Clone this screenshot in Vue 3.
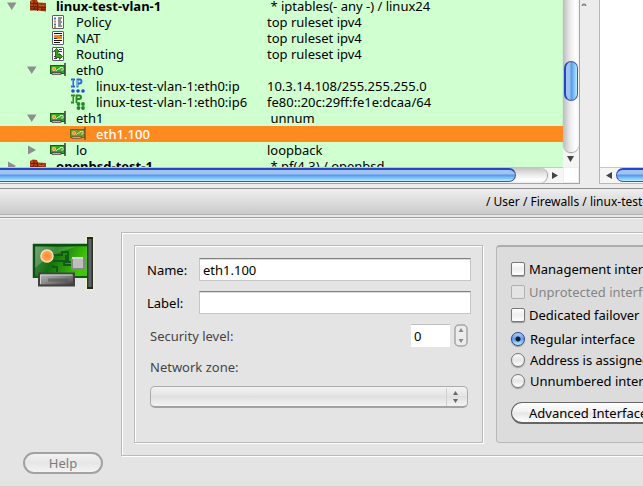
<script setup>
import { ref } from 'vue'

const rows = [
  { level: 0, arrow: 'open', icon: 'firewall', name: 'linux-test-vlan-1', attr: ' * iptables(- any -) / linux24', bold: true },
  { level: 1, icon: 'policy', name: 'Policy', attr: 'top ruleset ipv4' },
  { level: 1, icon: 'nat', name: 'NAT', attr: 'top ruleset ipv4' },
  { level: 1, icon: 'routing', name: 'Routing', attr: 'top ruleset ipv4' },
  { level: 1, arrow: 'open', icon: 'card', name: 'eth0', attr: '' },
  { level: 2, icon: 'ip', name: 'linux-test-vlan-1:eth0:ip', attr: '10.3.14.108/255.255.255.0' },
  { level: 2, icon: 'ip6', name: 'linux-test-vlan-1:eth0:ip6', attr: 'fe80::20c:29ff:fe1e:dcaa/64' },
  { level: 1, arrow: 'open', icon: 'card', name: 'eth1', attr: ' unnum' },
  { level: 2, icon: 'card', name: 'eth1.100', attr: '', selected: true },
  { level: 1, arrow: 'closed', icon: 'card', name: 'lo', attr: 'loopback' },
  { level: 0, arrow: 'closed', icon: 'firewall', name: 'openbsd-test-1', attr: ' * pf(4.3) / openbsd', bold: true },
]

const name = ref('eth1.100')
const label = ref('')
const security = ref('0')
const kind = ref('regular')
const kinds = [
  { id: 'regular', text: 'Regular interface' },
  { id: 'dynamic', text: 'Address is assigned dynamically' },
  { id: 'unnumbered', text: 'Unnumbered interface' },
]
const flags = [
  { id: 'management', text: 'Management interface' },
  { id: 'unprotected', text: 'Unprotected interface', disabled: true },
  { id: 'failover', text: 'Dedicated failover interface' },
]
</script>

<template>
  <div class="page">
    <section class="top">
      <div class="tree-pane">
        <div class="tree-view">
          <table class="tree">
            <colgroup><col class="col-name"><col></colgroup>
            <tbody>
              <tr v-for="row in rows" :key="row.name" :class="{ selected: row.selected }">
                <td>
                  <div class="node" :style="{ paddingLeft: row.level * 20 + 'px' }">
                    <span class="twist">
                      <svg v-if="row.arrow" width="10" height="10" viewBox="0 0 10 10">
                        <path :d="row.arrow === 'open' ? 'M0 1.500h9.500L4.750 9z' : 'M1 0.500v9L9 5z'" fill="#8e8e8e" />
                      </svg>
                    </span>
                    <span class="icon">
                      <svg v-if="row.icon === 'firewall'" width="16" height="14" viewBox="0 0 16 14">
                        <path d="M0 2l3-1.500 4 .5 1 2.500 8 .5v8.500l-8-1-8 0z" fill="#a83a0c" />
                        <path d="M0 4.500h7M0 7.500l16 1M0 10l16 .5M4 1.500v3M7.500 3v9M3 5v3M11.500 4.500v3M12 8v4M4.500 8v3" stroke="#6e2205" fill="none" />
                        <path d="M1 3h2M9 6.500h5M1 6h2M9 10h2" stroke="#d2602c" fill="none" />
                      </svg>
                      <svg v-else-if="row.icon === 'policy'" width="16" height="14" viewBox="0 0 16 14">
                        <rect x="2.500" y="0.500" width="11" height="13" rx="0.500" fill="#fff" stroke="#5c5c6c" />
                        <path d="M4 3.500h2M4 9.500h2" stroke="#2a78d8" stroke-width="2" />
                        <path d="M4 6.500h2M4 12h2" stroke="#f08020" stroke-width="2" />
                        <path d="M8 3h4M8 5h3M8 7h4M8 9h3M8 11h4" stroke="#222" />
                      </svg>
                      <svg v-else-if="row.icon === 'nat'" width="16" height="14" viewBox="0 0 16 14">
                        <rect x="2.500" y="0.500" width="11" height="13" rx="0.500" fill="#fff" stroke="#5c5c6c" />
                        <path d="M4 2.500h8M4 9.500h8M4 11.500h6" stroke="#111" />
                        <rect x="4" y="4" width="8" height="4" fill="#ee8420" />
                        <path d="M4 7.500h3M10 4.500h2" stroke="#32323a" />
                      </svg>
                      <svg v-else-if="row.icon === 'routing'" width="16" height="14" viewBox="0 0 16 14">
                        <rect x="2.500" y="0.500" width="11" height="13" rx="0.500" fill="#fff" stroke="#5c5c6c" />
                        <path d="M9 2.500h3M9 4.500h3M4 9.500h2M4 11.500h3" stroke="#333" />
                        <path d="M6.500 1.500l3 3H8v3h1.500v-1l3 3-3 3v-2H5.500v-6H3.500z" fill="#3c9c1e" stroke="#14500c" stroke-width="0.800" />
                      </svg>
                      <svg v-else-if="row.icon === 'card'" width="16" height="14" viewBox="0 0 16 14" :opacity="row.selected ? 0.700 : 1">
                        <rect x="0.500" y="2.500" width="14" height="8" fill="#2fa41c" stroke="#0c6a0c" />
                        <path d="M6 8l2-2h2V4.500h3V7h-2" fill="none" stroke="#d8e8d0" />
                        <circle cx="4" cy="6" r="1.800" fill="#ff9838" stroke="#f0dc98" stroke-width="0.700" />
                        <rect x="2" y="9.500" width="9" height="2" fill="#b4b4b4" stroke="#383838" stroke-width="0.700" />
                        <path d="M15 0v13" stroke="#404840" stroke-width="1.600" />
                      </svg>
                      <svg v-else-if="row.icon === 'ip'" width="16" height="16" viewBox="0 0 16 16">
                        <path d="M1 1.500h4M3 1v8M1 8.500h4M7.500 9.500V1.500h2.500q1.500 0 1.500 2t-2 2h-1.500" fill="none" stroke="#2468e0" stroke-width="1.900" />
                        <path d="M2.500 2v6M7.500 2v6" stroke="#8cc0ff" stroke-width="0.700" />
                        <g fill="#1c50d0"><circle cx="3" cy="13" r="1.800" /><circle cx="8" cy="13" r="1.800" /><circle cx="13" cy="13" r="1.800" /></g>
                      </svg>
                      <svg v-else width="16" height="16" viewBox="0 0 16 16">
                        <path d="M1 1.500h4M3 1v8M1 8.500h3M6.500 9V1.500h3q1.500 0 1.500 1.700t-2 1.800h-2" fill="none" stroke="#258a20" stroke-width="1.900" />
                        <path d="M2.500 2v6" stroke="#90d880" stroke-width="0.700" />
                        <g fill="#1f8a1c"><circle cx="8.500" cy="10" r="1.900" /><circle cx="13" cy="10" r="1.900" /><circle cx="8.500" cy="14" r="1.900" /><circle cx="13" cy="14" r="1.900" /></g>
                      </svg>
                    </span>
                    <span :class="{ bold: row.bold }">{{ row.name }}</span>
                  </div>
                </td>
                <td>{{ row.attr }}</td>
              </tr>
            </tbody>
          </table>
        </div>
        <div class="vscroll">
          <div class="vtrack"><div class="vthumb"></div></div>
          <svg width="15" height="15" viewBox="0 0 15 15"><path d="M4 4h7l-3.500 6z" fill="#444" /></svg>
        </div>
        <div class="hscroll">
          <div class="htrack"><div class="hthumb"></div></div>
          <svg width="16" height="15" viewBox="0 0 16 15"><path d="M5 4v7l6-3.500z" fill="#444" /></svg>
        </div>
        <div class="corner"></div>
      </div>
      <div class="gutter">
        <svg width="6" height="4" viewBox="0 0 6 4"><path d="M1 3q0-2 2-2t2 2" fill="#bbb" stroke="#666" /></svg>
      </div>
      <div class="side-pane">
        <div class="side-body"></div>
        <div class="side-scroll">
          <svg width="16" height="15" viewBox="0 0 16 15"><path d="M12 4v7L6 7.500z" fill="#444" /></svg>
          <div class="hthumb left"></div>
        </div>
      </div>
    </section>

    <nav class="crumbs">/ User / Firewalls / linux-test-vlan-1 / eth1 / eth1.100</nav>
    <div class="divider"></div>

    <main class="editor">
      <aside class="left">
        <svg class="big-card" width="64" height="56" viewBox="0 0 64 56">
          <defs>
            <linearGradient id="pcb" x1="0" x2="1" y1="0" y2="0.300"><stop offset="0" stop-color="#5d9463" /><stop offset="0.450" stop-color="#12700d" /><stop offset="1" stop-color="#42c609" /></linearGradient>
            <linearGradient id="metal" x1="0" x2="1" y1="0" y2="1"><stop offset="0" stop-color="#bcbcbc" /><stop offset="0.500" stop-color="#858585" /><stop offset="1" stop-color="#393939" /></linearGradient>
            <linearGradient id="bracket" x1="0" x2="1" y1="0" y2="0"><stop offset="0" stop-color="#252a29" /><stop offset="0.500" stop-color="#66706d" /><stop offset="1" stop-color="#1e2322" /></linearGradient>
            <radialGradient id="led"><stop offset="0" stop-color="#ff862c" /><stop offset="1" stop-color="#ffae68" /></radialGradient>
          </defs>
          <rect x="54" y="1" width="8" height="54" rx="1" fill="#f2f5b9" stroke="#ecedcc" />
          <rect x="1" y="9" width="54" height="34" fill="url(#pcb)" />
          <path d="M1 10h54M2 9v34" stroke="#0b4f13" stroke-width="2.500" fill="none" />
          <path d="M2 42h53" stroke="#0b5d10" stroke-width="2" />
          <path d="M3 12h40Q18 19 3 33z" fill="#fff" opacity="0.180" />
          <path d="M21 20h9v-3h6v10h4M21 26h11v4h8M25 37v-5h-4v-2M34 20v7h5" fill="none" stroke="#12591a" stroke-width="2" />
          <circle cx="15" cy="21" r="6" fill="url(#led)" stroke="#fae0b5" stroke-width="1.500" />
          <rect x="40" y="23" width="12" height="11" rx="1" fill="#bebebe" stroke="#858b82" stroke-width="2" />
          <path d="M40 23h11" stroke="#efefef" stroke-width="1.500" />
          <rect x="7" y="38.500" width="35" height="12" fill="url(#metal)" stroke="#414141" stroke-width="2" />
          <path d="M8.500 49V40h32" stroke="#d2d2d2" fill="none" />
          <path d="M16 45h20" stroke="#555" stroke-width="3" opacity="0.600" />
          <rect x="55" y="2" width="6" height="52" fill="url(#bracket)" />
          <path d="M55 3h6M55 53h6" stroke="#202525" stroke-width="2" />
        </svg>
        <button class="help" type="button" disabled>Help</button>
      </aside>

      <form class="frame outer" @submit.prevent>
        <div class="frame fields">
          <div class="field">
            <label for="name">Name:</label>
            <input id="name" v-model="name" class="text" type="text">
          </div>
          <div class="field second">
            <label for="label">Label:</label>
            <input id="label" v-model="label" class="text" type="text">
          </div>
          <div class="security">
            <label for="security">Security level:</label>
            <input id="security" v-model="security" type="text" class="level" disabled>
            <svg width="14" height="23" viewBox="0 0 14 23">
              <rect x="1" y="1" width="12" height="21" rx="4" fill="#ececec" stroke="#a6a6a6" stroke-width="1.500" />
              <path d="M4.500 8h5L7 4zM4.500 15h5L7 19z" fill="#8a8a8a" />
            </svg>
          </div>
          <label class="zone-label" for="zone">Network zone:</label>
          <div class="zone">
            <select id="zone" disabled></select>
            <svg width="21" height="20" viewBox="0 0 21 20"><path d="M0.500 1v18" stroke="#cfcfcf" /><path d="M7 8h5L9.500 4zM7 12h5l-2.500 4z" fill="#686868" /></svg>
          </div>
        </div>

        <div class="options">
          <label v-for="f in flags" :key="f.id" class="check" :class="{ off: f.disabled }">
            <input type="checkbox" :disabled="f.disabled">{{ f.text }}
          </label>
          <div class="radios">
            <label v-for="k in kinds" :key="k.id" class="radio">
              <input v-model="kind" type="radio" name="kind" :value="k.id">{{ k.text }}
            </label>
          </div>
          <button class="advanced" type="button">Advanced Interface Settings ...</button>
        </div>
      </form>
    </main>
  </div>
</template>

<style>
body { background: #e4e4e4; }
</style>

<style scoped>
.page {
  display: flex;
  flex-direction: column;
  min-height: 100vh;
  box-sizing: border-box;
  overflow: hidden;
  border-bottom: 1px solid #cfcfcf;
  background: #e4e4e4;
  color: #000;
  font: 13px/16px "Noto Sans", "Open Sans", sans-serif;
}
.page * { box-sizing: border-box; }
svg { display: block; flex: none; }
input, button, select { font: inherit; color: inherit; margin: 0; }

.top { display: flex; background: #ececec; padding-bottom: 4px; }
.tree-pane {
  flex: none;
  display: grid;
  grid-template-columns: 563px 16px;
  grid-template-rows: 167px 16px;
  border-right: 1px solid #91a9c8;
  border-bottom: 1px solid #91a9c8;
  background: #fff;
}
.tree-view { overflow: hidden; background: #d0ffd0; }
.tree { width: 100%; margin-top: -2px; border-collapse: collapse; table-layout: fixed; }
.col-name { width: 267px; }
.tree td { height: 16px; padding: 0; white-space: pre; }
.node { display: flex; align-items: center; height: 16px; }
.twist { width: 23px; margin-left: 7px; }
.icon { width: 26px; }
.bold { font-weight: 700; }
.selected { background: #ff8a20; color: #fff; font-weight: 500; }

.vscroll { display: flex; flex-direction: column; background: #f5f5f5; }
.vtrack {
  flex: 1;
  padding: 61px 1px 0;
  border-radius: 0 0 8px 8px;
  background: linear-gradient(90deg, #bcbcbc, #ececec 45%, #fff 80%, #f2f2f2);
  box-shadow: 0 1px 1px #999;
}
.vthumb {
  height: 40px;
  border: 1px solid #4a58a0;
  border-left: 2px solid #2446c4;
  border-radius: 7px;
  background: linear-gradient(90deg, #a3c3ee, #9dc2f2 38%, #4f94e8 44%, #7cbcf8 70%, #b8eaff);
}
.hscroll { display: flex; background: #f5f5f5; border-top: 1px solid #c8c8c8; }
.htrack {
  flex: 1;
  padding-right: 31px;
  border-radius: 0 8px 8px 0;
  background: linear-gradient(#c4c4c4, #eaeaea 45%, #fff 80%, #eee);
  box-shadow: 1px 0 1px #999;
}
.hthumb {
  height: 14px;
  border: 1px solid #4a5c88;
  border-top: 2px solid #2446c4;
  border-left: 0;
  border-radius: 0 7px 7px 0;
  background: linear-gradient(#a3c3ee, #9dc2f2 38%, #4f94e8 44%, #7cbcf8 70%, #b8eaff);
}
.hthumb.left { flex: 1; border-left: 1px solid #3453b8; border-right: 0; border-radius: 7px 0 0 7px; }
.corner { background: #fff; border: 1px solid #eee; }
.gutter { flex: none; width: 19px; padding: 3px 0 0 1px; }
.side-pane { flex: 1; display: flex; flex-direction: column; border-left: 1px solid #b8b8b8; border-bottom: 1px solid #b8b8b8; background: #fff; }
.side-body { flex: 1; }
.side-scroll { display: flex; height: 16px; border-top: 1px solid #c8c8c8; background: #f5f5f5; }

.crumbs {
  height: 27px;
  padding-left: 486px;
  border-top: 1px solid #8e8e8e;
  border-bottom: 1px solid #b2b2b2;
  background: linear-gradient(#efefef, #cacaca);
  font-size: 12px;
  line-height: 25px;
  white-space: nowrap;
}
.divider { height: 4px; border-top: 2px solid #e8e8e8; border-bottom: 1px solid #f6f6f6; background: #9e9e9e; }

.editor { flex: 1; display: flex; align-items: flex-start; padding-top: 13px; }
.left { width: 121px; flex: none; padding: 3px 0 0 23px; }
.big-card { margin-left: 9px; }
.help {
  display: block;
  width: 80px;
  height: 22px;
  margin-top: 161px;
  padding: 0;
  border: 2px solid #a2a2a2;
  border-radius: 11px;
  background: linear-gradient(#f2f2f2, #e6e6e6 50%, #f4f4f4);
  color: #7c7c7c;
  line-height: 16px;
}

.frame { border: 1px solid #b9b9b9; box-shadow: inset 1px 1px #fff, 1px 1px #fff; }
.outer { flex: 1 0 auto; display: flex; gap: 13px; padding: 12px; }
.fields { width: 349px; height: 198px; padding: 12px 11px 0 12px; }
.field { display: flex; align-items: center; }
.field label { width: 52px; }
.second { margin-top: 10px; }
.text, .level {
  height: 23px;
  border: 1px solid #c6c6c6;
  border-top: 1px solid #808080;
  border-radius: 0;
  background: #fff;
  padding: 0 3px;
  outline: 0;
}
.text { flex: 1; min-width: 0; box-shadow: inset 0 1px #ddd; }
.security { display: flex; align-items: center; margin: 10px 3px 0; color: #444; }
.security label { flex: 1; }
.level { width: 39px; margin-right: 4px; border: 0; border-top: 1px solid #c0c0c0; color: #000; }
.zone-label { display: block; margin: 12px 3px 0; color: #444; }
.zone { position: relative; margin: 11px 3px 0; }
.zone select {
  display: block;
  width: 100%;
  height: 22px;
  appearance: none;
  border: 1px solid #ababab;
  border-bottom: 2px solid #a2a2a2;
  border-radius: 5px;
  background: linear-gradient(#f3f3f3, #e4e4e4 45%, #dfdfdf 50%, #f4f4f4);
  opacity: 1;
}
.zone svg { position: absolute; top: 1px; right: 1px; }

.options {
  display: flex;
  flex-direction: column;
  align-items: flex-start;
  flex: 1 0 auto;
  padding: 10px 14px 0;
  border: 1px solid #b8b8b8;
  border-top: 2px solid #adadad;
  border-radius: 4px;
  background: #dcdcdc;
  white-space: nowrap;
}
.check, .radio { display: flex; align-items: center; gap: 4px; height: 23px; }
.radio { height: 21px; gap: 5px; }
.radios { margin-top: 2px; }
.off { color: #858585; }
.check input, .radio input {
  appearance: none;
  width: 14px;
  height: 14px;
  border: 1px solid #777;
  border-radius: 2px;
  background: linear-gradient(#fff, #eee 50%, #fff);
  box-shadow: 0 1px 1px #999;
}
.check input:disabled { border-color: #b0b0b0; background: #e4e4e4; box-shadow: none; }
.radio input { border-radius: 7px; background: linear-gradient(#fafafa, #e6e6e6 50%, #fff); }
.radio input:checked {
  border-color: #303f90;
  background: radial-gradient(circle, #101c38 2px, transparent 3px), linear-gradient(#b4d0f4, #5c9ce8 50%, #c0f0ff);
}
.advanced {
  height: 22px;
  margin-top: 11px;
  padding: 0 17px;
  border: 1px solid #666;
  border-bottom-width: 2px;
  border-radius: 11px;
  background: linear-gradient(#fff, #f0f0f0 48%, #e6e6e6 52%, #fff);
  line-height: 18px;
}
</style>
